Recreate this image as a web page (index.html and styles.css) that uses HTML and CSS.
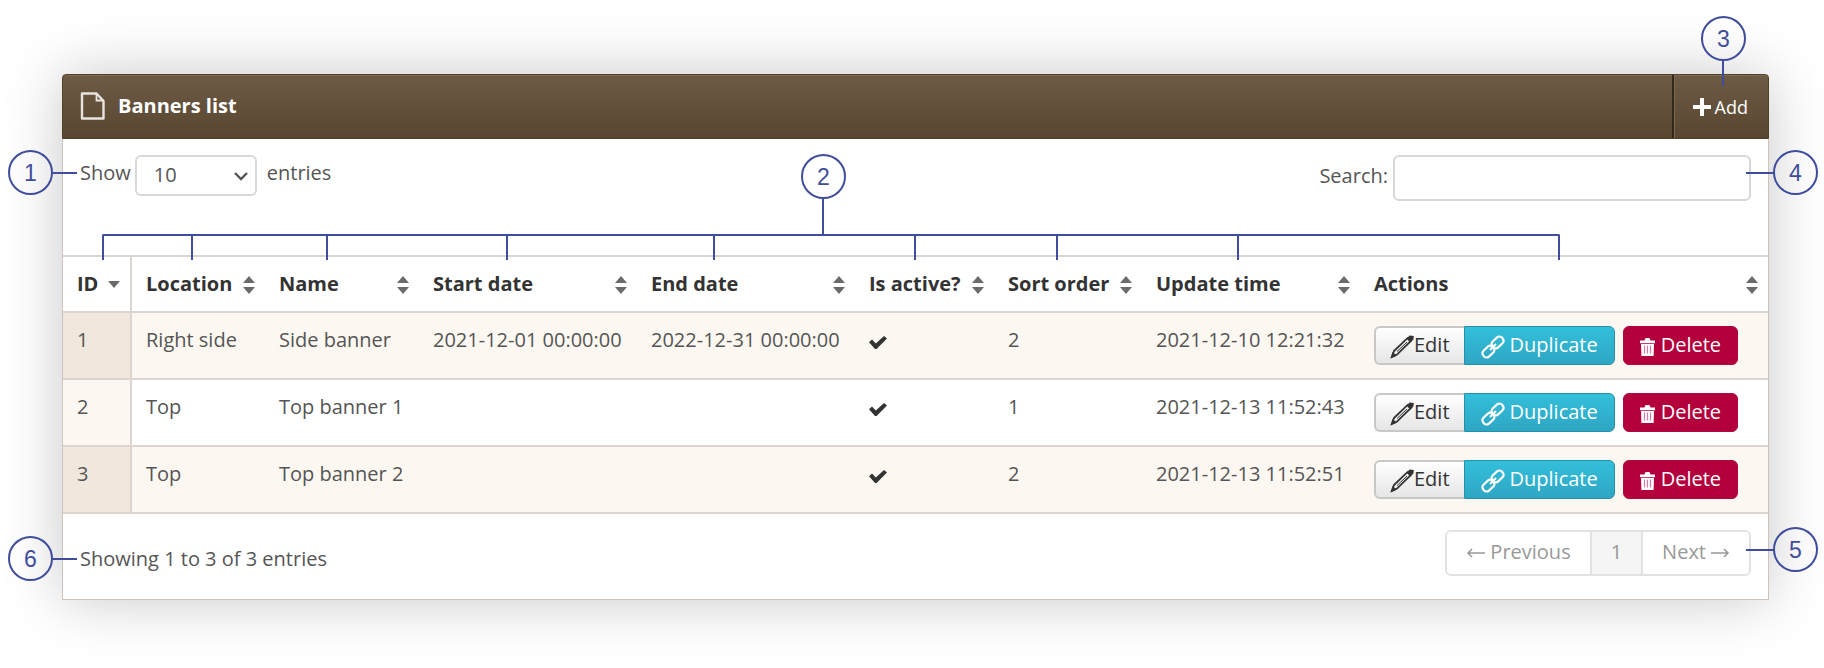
FILE: index.html
```html
<!DOCTYPE html>
<html lang="en">
<head>
<meta charset="utf-8">
<title>Banners list</title>
<link rel="stylesheet" href="styles.css">
</head>
<body>
<svg class="defs" aria-hidden="true">
  <symbol id="sort" viewBox="0 0 12 18"><path d="M6 0l6 7H0zM0 11h12l-6 7z" fill="#6b6b6b"/></symbol>
  <symbol id="check" viewBox="0 0 18 13"><path d="M0 6.2L3 3.6 6.8 7.4 15 0l3 2.6L7.6 13H6z" fill="#333"/></symbol>
  <symbol id="pencil" viewBox="0 0 24 24"><path d="M4 16L17.4 3.2l3 3.2L7 19.6 2 21.8z" fill="none" stroke="#333" stroke-width="1.8"/><path d="M7 16.6L17 7" stroke="#333" stroke-width="1"/><path d="M16.6 3.4L19.6.4 23.8 1l-.4 3.6-2.8 3zM.4 23.6L2.6 17l4.2 3.8z" fill="#333"/></symbol>
  <symbol id="link" viewBox="0 0 24 24"><g fill="none" stroke="#fff" stroke-width="2.2"><rect x="-6.4" y="-4" width="12.8" height="8" rx="3.4" transform="translate(16.6 7.4) rotate(-43)"/><rect x="-6.4" y="-4" width="12.8" height="8" rx="3.4" transform="translate(7.4 16.6) rotate(-43)"/><path d="M9 15l6-6"/></g></symbol>
  <symbol id="trash" viewBox="0 0 15 18"><path d="M0 2.6h4.4L5.6 0h3.8l1.2 2.6H15v2.6H0zM1 6h13l-.4 12H1.4z" fill="#fff"/><path d="M4.5 7.5v8M7.5 7.5v8M10.5 7.5v8" stroke="#d77aa8" stroke-width="1.2"/></symbol>
</svg>

<main class="page">
  <section class="panel">
    <header class="panel-head">
      <h1 class="title">
        <svg class="doc-icon" viewBox="0 0 25 28" aria-hidden="true"><path d="M2 1.5h14.5L23.5 9v17.5H2z" fill="none" stroke="#e8e4df" stroke-width="2.4" stroke-linejoin="round"/><path d="M16.5 1.5V8.5H23.5" fill="none" stroke="#e8e4df" stroke-width="1.8"/></svg>
        Banners list
      </h1>
      <button class="add" type="button"><svg class="plus" viewBox="0 0 18 18" aria-hidden="true"><path d="M9 0v18M0 9h18" stroke="#fff" stroke-width="4"/></svg>Add</button>
    </header>

    <div class="toolbar">
      <div class="length">
        <label for="length">Show</label>
        <span class="select-wrap">
          <select id="length" class="select"><option>10</option></select>
          <svg class="chevron" viewBox="0 0 14 9" aria-hidden="true"><path d="M1 1l6 6 6-6" fill="none" stroke="#555" stroke-width="2.4"/></svg>
        </span>
        <span class="entries">entries</span>
      </div>
      <div class="search">
        <label for="search">Search:</label>
        <input id="search" class="search-input" type="text">
      </div>
    </div>

    <table class="banners">
      <colgroup><col class="c-id"><col class="c-location"><col class="c-name"><col class="c-date"><col class="c-date"><col class="c-active"><col class="c-order"><col class="c-date"><col class="c-actions"></colgroup>
      <thead>
        <tr>
          <th><span class="th">ID<svg class="sort-desc" viewBox="0 0 12 7"><path d="M0 0h12L6 7z" fill="#6b6b6b"/></svg></span></th>
          <th><span class="th">Location<svg class="sort"><use href="#sort"/></svg></span></th>
          <th><span class="th">Name<svg class="sort"><use href="#sort"/></svg></span></th>
          <th><span class="th">Start date<svg class="sort"><use href="#sort"/></svg></span></th>
          <th><span class="th">End date<svg class="sort"><use href="#sort"/></svg></span></th>
          <th><span class="th">Is active?<svg class="sort"><use href="#sort"/></svg></span></th>
          <th><span class="th">Sort order<svg class="sort"><use href="#sort"/></svg></span></th>
          <th><span class="th">Update time<svg class="sort"><use href="#sort"/></svg></span></th>
          <th><span class="th">Actions<svg class="sort"><use href="#sort"/></svg></span></th>
        </tr>
      </thead>
      <tbody>
        <tr>
          <td>1</td><td>Right side</td><td>Side banner</td><td>2021-12-01 00:00:00</td><td>2022-12-31 00:00:00</td>
          <td><svg class="check" role="img" aria-label="Active"><use href="#check"/></svg></td><td>2</td><td>2021-12-10 12:21:32</td>
          <td><div class="actions"><button class="btn edit" type="button"><svg class="pencil"><use href="#pencil"/></svg>Edit</button><button class="btn duplicate" type="button"><svg class="link"><use href="#link"/></svg>Duplicate</button><button class="btn delete" type="button"><svg class="trash"><use href="#trash"/></svg>Delete</button></div></td>
        </tr>
        <tr>
          <td>2</td><td>Top</td><td>Top banner 1</td><td></td><td></td>
          <td><svg class="check" role="img" aria-label="Active"><use href="#check"/></svg></td><td>1</td><td>2021-12-13 11:52:43</td>
          <td><div class="actions"><button class="btn edit" type="button"><svg class="pencil"><use href="#pencil"/></svg>Edit</button><button class="btn duplicate" type="button"><svg class="link"><use href="#link"/></svg>Duplicate</button><button class="btn delete" type="button"><svg class="trash"><use href="#trash"/></svg>Delete</button></div></td>
        </tr>
        <tr>
          <td>3</td><td>Top</td><td>Top banner 2</td><td></td><td></td>
          <td><svg class="check" role="img" aria-label="Active"><use href="#check"/></svg></td><td>2</td><td>2021-12-13 11:52:51</td>
          <td><div class="actions"><button class="btn edit" type="button"><svg class="pencil"><use href="#pencil"/></svg>Edit</button><button class="btn duplicate" type="button"><svg class="link"><use href="#link"/></svg>Duplicate</button><button class="btn delete" type="button"><svg class="trash"><use href="#trash"/></svg>Delete</button></div></td>
        </tr>
      </tbody>
    </table>

    <footer class="panel-foot">
      <span>Showing 1 to 3 of 3 entries</span>
      <nav class="pager" aria-label="Pages">
        <button type="button"><svg class="arrow" viewBox="0 0 19 10"><path d="M19 5H2M6 1L2 5l4 4" fill="none" stroke="#999" stroke-width="1.5"/></svg>Previous</button>
        <button class="current" type="button">1</button>
        <button type="button">Next<svg class="arrow" viewBox="0 0 19 10"><path d="M0 5h17M13 1l4 4-4 4" fill="none" stroke="#999" stroke-width="1.5"/></svg></button>
      </nav>
    </footer>
  </section>

  <div class="callout n1">1</div>
  <div class="callout n2">2</div>
  <div class="callout n3">3</div>
  <div class="callout n4">4</div>
  <div class="callout n5">5</div>
  <div class="callout n6">6</div>
  <div class="bracket"><i class="t1"></i><i class="t2"></i><i class="t3"></i><i class="t4"></i><i class="t5"></i><i class="t6"></i><i class="t7"></i></div>
</main>
</body>
</html>
```
FILE: styles.css
```css
* { box-sizing: border-box; }
body {
  margin: 0;
  background: #fff;
  color: #555;
  font: 20px/28px "Open Sans", "Noto Sans", sans-serif;
}
button, input, select { font: inherit; color: inherit; margin: 0; }
.defs { display: none; }

.page { position: relative; padding: 74px 55px 68px 62px; }
.panel {
  border: 1px solid #cdc4bd;
  border-top: 0;
  border-radius: 4px 4px 0 0;
  background: #fff;
  box-shadow: 0 0 60px rgba(0, 0, 0, .22);
}

.panel-head {
  display: flex;
  justify-content: space-between;
  height: 65px;
  margin: 0 -1px;
  border: 1px solid #54402a;
  border-radius: 4px 4px 0 0;
  background: linear-gradient(#6d5b46, #584630);
  box-shadow: inset 0 1px #7d6b56;
  color: #fff;
}
.title {
  display: flex;
  align-items: center;
  gap: 13px;
  margin: 0;
  padding: 0 17px 2px;
  font-size: 20px;
  font-weight: 700;
}
.doc-icon { width: 25px; height: 28px; }
.add {
  display: flex;
  align-items: center;
  gap: 4px;
  padding: 0 20px 0 19px;
  border: 0;
  border-left: 2px solid #32281c;
  background: none;
  box-shadow: inset 1px 0 #7a6853;
  font-size: 18px;
}
.plus { width: 18px; height: 18px; }

.toolbar {
  display: flex;
  justify-content: space-between;
  height: 116px;
  padding: 16px 17px 0;
}
.length, .search { display: flex; align-items: flex-start; }
.length label, .entries { padding-top: 4px; }
.select-wrap { position: relative; margin: 0 10px 0 4px; }
.select {
  display: block;
  appearance: none;
  width: 122px;
  height: 41px;
  padding: 0 17px 2px;
  border: 2px solid #d8d8d8;
  border-radius: 6px;
  background: #fff;
}
.chevron { position: absolute; right: 9px; top: 17px; width: 14px; height: 9px; pointer-events: none; }
.search { gap: 5px; }
.search label { padding-top: 7px; }
.search-input {
  width: 358px;
  height: 46px;
  padding: 0 12px;
  border: 2px solid #d8d8d8;
  border-radius: 6px;
  background: #fff;
}

.banners { width: 100%; table-layout: fixed; border-collapse: separate; border-spacing: 0; border-top: 2px solid #dbd4d0; }
.c-id { width: 69px; }
.c-location { width: 133px; }
.c-name { width: 154px; }
.c-date { width: 218px; }
.c-active { width: 139px; }
.c-order { width: 148px; }
.c-actions { width: 408px; }
th { padding: 13px 10px 13px 14px; color: #333; text-align: left; border-bottom: 2px solid #dbd4d0; }
.th { display: flex; align-items: center; justify-content: space-between; white-space: nowrap; }
.sort { width: 12px; height: 18px; margin-top: 2px; }
.sort-desc { width: 12px; height: 7px; }
td {
  height: 67px;
  padding: 13px 14px 0;
  border-bottom: 2px solid #dbd4d0;
  vertical-align: top;
  white-space: nowrap;
}
td:last-child { padding-right: 0; }
th:first-child, td:first-child { border-right: 2px solid #dbd4d0; }
tbody tr:nth-child(odd) { background: #fcf8f1; }
tbody td:first-child { background: #fcf8f1; }
tbody tr:nth-child(odd) td:first-child { background: #f0e8dd; }
.check { display: block; width: 18px; height: 13px; margin-top: 10px; }

.actions { display: flex; }
.btn {
  display: flex;
  align-items: center;
  height: 39px;
  padding: 0 16px 2px;
  border: 1px solid;
  color: #fff;
}
.edit {
  padding: 0 14px 1px;
  border: 2px solid #c8c8c8;
  border-right: 0;
  border-radius: 6px 0 0 6px;
  background: linear-gradient(#fff, #e6e6e6);
  color: #333;
}
.duplicate {
  gap: 5px;
  border-color: #2490aa;
  border-radius: 0 6px 6px 0;
  background: linear-gradient(#33bfdb, #2ea6c3);
}
.delete {
  gap: 6px;
  margin-left: 8px;
  border-color: #b00840;
  border-radius: 6px;
  background: #b3003c;
}
.pencil, .link { width: 24px; height: 24px; margin-top: 4px; }
.trash { width: 15px; height: 18px; margin-top: 4px; }

.panel-foot {
  display: flex;
  align-items: flex-start;
  justify-content: space-between;
  padding: 16px 17px 23px;
}
.panel-foot > span { padding-top: 15px; }
.pager { display: flex; border: 2px solid #e2e2e2; border-radius: 6px; overflow: hidden; }
.pager button {
  display: flex;
  align-items: center;
  gap: 5px;
  height: 42px;
  padding: 0 19px 2px;
  border: 0;
  background: #fff;
  color: #999;
}
.pager .current { border: solid #e2e2e2; border-width: 0 2px; background: #f5f5f5; }
.arrow { width: 19px; height: 10px; margin-top: 2px; }

.callout {
  position: absolute;
  display: flex;
  align-items: center;
  justify-content: center;
  width: 45px;
  height: 45px;
  border: 2px solid #3f4d9c;
  border-radius: 50%;
  color: #3f4d9c;
  font: 23px/28px "Liberation Sans", Arial, sans-serif;
}
.callout::after { content: ""; position: absolute; background: #3f4d9c; }
.n1 { left: 8px; top: 150px; }
.n6 { left: 8px; top: 536px; }
.n1::after, .n6::after { left: 42px; top: 20px; width: 25px; height: 2px; }
.n2 { left: 801px; top: 154px; }
.n2::after { left: 19px; top: 42px; width: 2px; height: 37px; }
.n3 { right: 78px; top: 16px; }
.n3::after { left: 19px; top: 42px; width: 2px; height: 26px; }
.n4, .n5 { right: 6px; }
.n4 { top: 150px; }
.n5 { top: 527px; }
.n4::after, .n5::after { right: 42px; top: 20px; width: 28px; height: 2px; }
.bracket {
  position: absolute;
  left: 102px;
  right: 264px;
  top: 234px;
  height: 26px;
  border: 2px solid #3f4d9c;
  border-bottom: 0;
  border-radius: 2px 2px 0 0;
}
.bracket i { position: absolute; top: 0; width: 2px; height: 24px; background: #3f4d9c; }
.t1 { left: 87px; }
.t2 { left: 222px; }
.t3 { left: 402px; }
.t4 { left: 609px; }
.t5 { left: 810px; }
.t6 { left: 952px; }
.t7 { left: 1133px; }
```
